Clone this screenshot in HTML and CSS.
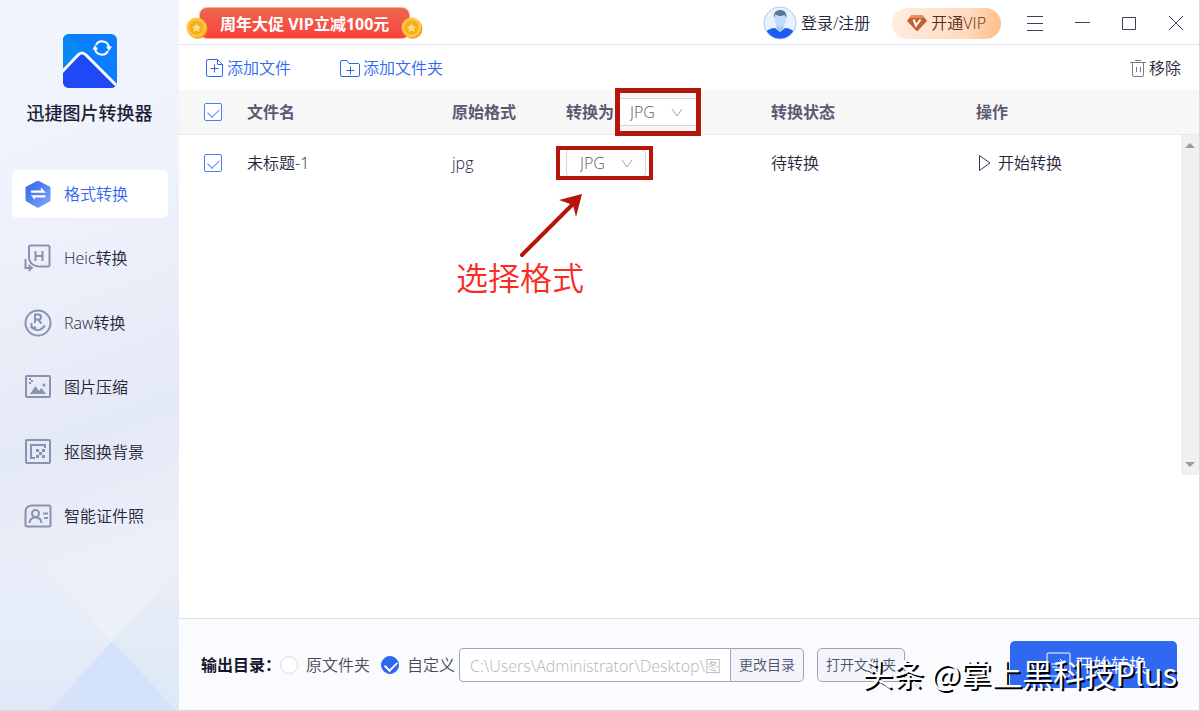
FILE: index.html
```html
<!DOCTYPE html>
<html lang="zh-CN">
<head>
    <meta charset="UTF-8">
    <meta name="viewport" content="width=device-width, initial-scale=1.0">
    <title>迅捷图片转换器</title>
    <link rel="stylesheet" href="styles.css">
</head>
<body>
    <aside class="sidebar">
        <svg class="facets" viewBox="0 0 179 171" preserveAspectRatio="none">
            <defs>
                <linearGradient id="facetLeft" x1="0" y1="0" x2="0" y2="1">
                    <stop offset="0" stop-color="#e9f0fb" stop-opacity=".3"/>
                    <stop offset="1" stop-color="#e0e7f7"/>
                </linearGradient>
                <linearGradient id="facetRight" x1="0" y1="0" x2="0" y2="1">
                    <stop offset="0" stop-color="#eaedf6"/>
                    <stop offset="1" stop-color="#dbe9f7"/>
                </linearGradient>
            </defs>
            <path d="M0 0H20L112 102L50 171H0Z" fill="url(#facetLeft)"/>
            <path d="M112 102L179 30V171H176Z" fill="url(#facetRight)"/>
            <path d="M112 102L176 171H50Z" fill="#d4e3f9"/>
        </svg>
        <div class="brand">
            <svg width="54" height="54" viewBox="0 0 54 54">
                <defs>
                    <clipPath id="logoClip"><rect width="54" height="54" rx="6"/></clipPath>
                </defs>
                <g clip-path="url(#logoClip)">
                    <rect width="54" height="54" fill="#0b7dff"/>
                    <path d="M0 0H5L30 26L0 40Z" fill="#0788f2"/>
                    <path d="M-3 40L15 21Q19 17 23 21L56 54V60H-3Z" fill="#1f49f6" stroke="#fff" stroke-width="3"/>
                </g>
                <g fill="none" stroke="#fff" stroke-width="2">
                    <path d="M33 11A7 7 0 0 1 46 13"/>
                    <path d="M45 17A7 7 0 0 1 32 15"/>
                </g>
                <path d="M43 12.500H49L46 17ZM29.500 15.500H35L32 11Z" fill="#fff"/>
            </svg>
            <h1>迅捷图片转换器</h1>
        </div>
        <nav class="menu">
            <a href="#" class="menu-item active">
                <svg width="28" height="28" viewBox="0 0 28 28">
                    <defs>
                        <linearGradient id="hex" x1="0" y1="0" x2="1" y2="1">
                            <stop offset="0" stop-color="#2c62ee"/>
                            <stop offset="1" stop-color="#84a6fb"/>
                        </linearGradient>
                    </defs>
                    <path d="M13 1Q14 .4 15 1L25.500 6.500Q26.500 7 26.500 8V20Q26.500 21 25.500 21.500L15 27.500Q14 28 13 27.500L2.500 21.500Q1.500 21 1.500 20V8Q1.500 7 2.500 6.500Z" fill="url(#hex)"/>
                    <path d="M7 10.500H17V7.500L22 12.800H7ZM21.500 17.500H11V20L7 15.200H21.500Z" fill="#fff"/>
                </svg>
                <span>格式转换</span>
            </a>
            <a href="#" class="menu-item">
                <svg class="line" width="28" height="28" viewBox="0 0 28 28">
                    <path d="M5 3Q5 1.500 6.500 1.500H24Q25.500 1.500 25.500 3V21Q25.500 22.500 24 22.500H14Q5 21 5 13Z"/>
                    <path d="M11.500 7V17M18.500 7V17M11.500 12H18.500M1.500 15V24H6"/>
                    <path d="M4.500 20L9.500 24L4.500 28Z" class="solid"/>
                </svg>
                <span>Heic转换</span>
            </a>
            <a href="#" class="menu-item">
                <svg class="line" width="28" height="28" viewBox="0 0 28 28">
                    <circle cx="14" cy="14" r="12.500"/>
                    <path d="M11 14V5.500H14.500Q17 5.500 17 8T14.500 10.500H11M14 10.500L17.500 14.500M7.500 14V19M7.500 18Q14 25 21 16.500M7 18.500H12"/>
                </svg>
                <span>Raw转换</span>
            </a>
            <a href="#" class="menu-item">
                <svg class="line" width="28" height="28" viewBox="0 0 28 28">
                    <rect x="2" y="3" width="24" height="21" rx="1"/>
                    <path d="M6 21L11.500 13L15 18L17.500 15L22 21Z" class="solid"/>
                    <circle cx="20" cy="12" r="1.500" class="solid"/>
                    <path d="M5 5H7V7H9V9H7V11H5V9H7V7H5Z" class="solid"/>
                </svg>
                <span>图片压缩</span>
            </a>
            <a href="#" class="menu-item">
                <svg class="line" width="28" height="28" viewBox="0 0 28 28">
                    <rect x="2" y="2" width="24" height="23" rx="1"/>
                    <path d="M11 20H7V7H21V10"/>
                    <path d="M12 11H15V14H12ZM18 11H21V14H18ZM15 14H18V17H15ZM12 17H15V20H12ZM18 17H21V20H18Z" class="solid"/>
                </svg>
                <span>抠图换背景</span>
            </a>
            <a href="#" class="menu-item">
                <svg class="line" width="28" height="28" viewBox="0 0 28 28">
                    <path d="M8 3.500H25Q26.500 3.500 26.500 5V23Q26.500 24.500 25 24.500H3Q1.500 24.500 1.500 23V10Q1.500 4 8 3.500Z"/>
                    <circle cx="11.500" cy="11.500" r="3.500"/>
                    <path d="M5.500 21Q6 15.500 11.500 15.500T17.500 21M19 11.500H24M20 16H24"/>
                </svg>
                <span>智能证件照</span>
            </a>
        </nav>
    </aside>

    <main class="main">
        <header class="topbar">
            <a href="#" class="promo">
                <svg class="coin" width="22" height="22" viewBox="0 0 22 22">
                    <circle cx="11.500" cy="11.800" r="10" fill="#f09a1a"/>
                    <circle cx="10.500" cy="10.500" r="10" fill="#ffc63c"/>
                    <circle cx="10.500" cy="10.500" r="7" fill="#f5ab25"/>
                    <path d="M10.500 6L12 9L15 9.500L13 12L13.500 15L10.500 13.500L7.500 15L8 12L6 9.500L9 9Z" fill="#ffdf7a"/>
                </svg>
                <span class="promo-text">周年大促 VIP立减100元</span>
                <svg class="coin" width="22" height="22" viewBox="0 0 22 22">
                    <circle cx="11.500" cy="11.800" r="10" fill="#f09a1a"/>
                    <circle cx="10.500" cy="10.500" r="10" fill="#ffc63c"/>
                    <circle cx="10.500" cy="10.500" r="7" fill="#f5ab25"/>
                    <path d="M10.500 6L12 9L15 9.500L13 12L13.500 15L10.500 13.500L7.500 15L8 12L6 9.500L9 9Z" fill="#ffdf7a"/>
                </svg>
            </a>
            <div class="account">
                <a href="#" class="login">
                    <svg width="34" height="34" viewBox="0 0 34 34">
                        <defs>
                            <clipPath id="avatarClip"><circle cx="17" cy="17" r="15.500"/></clipPath>
                        </defs>
                        <circle cx="17" cy="17" r="16" fill="#e9f3ff" stroke="#a9cbfa"/>
                        <g clip-path="url(#avatarClip)">
                            <path d="M2 34V27Q6 22 12 22L17 26L22 22Q28 22 32 27V34Z" fill="#1c5cf0"/>
                            <path d="M13.500 18H20.500V23Q17 27 13.500 23Z" fill="#a9c8f0"/>
                            <path d="M11.500 10Q17 7 23 10V15Q21 21 17.500 21T11.500 15Z" fill="#c3dcfb"/>
                            <path d="M11 12Q10 5 16 4Q24 3 23.500 12L21.500 9Q16 11 12.500 8.500Z" fill="#5b7796"/>
                        </g>
                    </svg>
                    <span>登录/注册</span>
                </a>
                <button class="vip">
                    <svg width="20" height="18" viewBox="0 0 20 18">
                        <path d="M4.500 1H15.500L20 7L11 16.500Q10 17.500 9 16.500L0 7Z" fill="#c5602f"/>
                        <path d="M4.500 1H15.500L17 4H2.500Z" fill="#e39062"/>
                        <path d="M6.500 5.500L9 11.500L13.500 5.500" fill="none" stroke="#fff" stroke-width="2"/>
                    </svg>
                    <span>开通VIP</span>
                </button>
                <div class="window-buttons">
                    <button aria-label="菜单"><svg width="18" height="18" viewBox="0 0 18 18"><path d="M1 2.500H17M1 9.500H17M1 16.500H17"/></svg></button>
                    <button aria-label="最小化"><svg width="18" height="18" viewBox="0 0 18 18"><path d="M2 8.500H17"/></svg></button>
                    <button aria-label="最大化"><svg width="18" height="18" viewBox="0 0 18 18"><path d="M2.500 3.500H15.500V15.500H2.500Z"/></svg></button>
                    <button aria-label="关闭"><svg width="18" height="18" viewBox="0 0 18 18"><path d="M2 2L16 16M16 2L2 16"/></svg></button>
                </div>
            </div>
        </header>

        <div class="toolbar">
            <button class="tool">
                <svg width="20" height="22" viewBox="0 0 20 22">
                    <path d="M3 2.500H12.500L17.500 7.500V18Q17.500 19.500 16 19.500H3.500Q1.500 19.500 1.500 18V4Q1.500 2.500 3 2.500ZM12.500 2.500V7.500H17.500M5.500 11.500H13.500M9.500 7.500V15.500"/>
                </svg>
                <span>添加文件</span>
            </button>
            <button class="tool">
                <svg width="22" height="22" viewBox="0 0 22 22">
                    <path d="M1.500 18V5Q1.500 3.500 3 3.500H8L10 6.500H19Q20.500 6.500 20.500 8V18Q20.500 19.500 19 19.500H3Q1.500 19.500 1.500 18ZM7.500 13.500H15.500M11.500 9.500V17.500"/>
                </svg>
                <span>添加文件夹</span>
            </button>
            <button class="tool remove">
                <svg width="18" height="20" viewBox="0 0 18 20">
                    <path d="M1 4.500H17M6 2.500H12M3.500 4.500V17Q3.500 18.500 5 18.500H13Q14.500 18.500 14.500 17V4.500M7.500 9V14M11.500 9V14"/>
                </svg>
                <span>移除</span>
            </button>
        </div>

        <section class="list">
            <table class="files">
                <colgroup>
                    <col class="col-check">
                    <col class="col-name">
                    <col class="col-format">
                    <col class="col-target">
                    <col class="col-status">
                    <col>
                </colgroup>
                <thead>
                    <tr>
                        <th class="check"><input type="checkbox" aria-label="全选" checked></th>
                        <th>文件名</th>
                        <th>原始格式</th>
                        <th>
                            <div class="target">
                                <label for="formatAll">转换为</label>
                                <div class="format format-all">
                                    <select id="formatAll"><option>JPG</option><option>PNG</option></select>
                                    <svg class="chevron" width="12" height="10" viewBox="0 0 12 10"><path d="M1 1L6 8L11 1"/></svg>
                                    <span class="mark"></span>
                                </div>
                            </div>
                        </th>
                        <th>转换状态</th>
                        <th>操作</th>
                    </tr>
                </thead>
                <tbody>
                    <tr>
                        <td class="check"><input type="checkbox" aria-label="选择 未标题-1" checked></td>
                        <td>未标题-1</td>
                        <td>jpg</td>
                        <td>
                            <div class="format format-row">
                                <select aria-label="目标格式"><option>JPG</option><option>PNG</option></select>
                                <svg class="chevron" width="12" height="10" viewBox="0 0 12 10"><path d="M1 1L6 8L11 1"/></svg>
                                <span class="mark"></span>
                                <div class="note">
                                    <svg width="64" height="66" viewBox="0 0 64 66">
                                        <path d="M4 63L54 13" stroke="#b4160c" stroke-width="4" stroke-linecap="round"/>
                                        <path d="M64 2L58 25L55 13L41 8Z" fill="#b4160c"/>
                                    </svg>
                                    <span>选择格式</span>
                                </div>
                            </div>
                        </td>
                        <td>待转换</td>
                        <td>
                            <button class="convert">
                                <svg width="14" height="18" viewBox="0 0 14 18"><path d="M1.500 1.500L12 9L1.500 16.500Z"/></svg>
                                <span>开始转换</span>
                            </button>
                        </td>
                    </tr>
                </tbody>
            </table>
            <div class="scrollbar">
                <svg width="10" height="6" viewBox="0 0 10 6"><path d="M0 6L5 1L10 6Z"/></svg>
                <svg width="10" height="6" viewBox="0 0 10 6"><path d="M0 0L5 5L10 0Z"/></svg>
            </div>
        </section>

        <footer class="output">
            <span class="output-title">输出目录：</span>
            <label class="choice"><input type="radio" name="dir"><span>原文件夹</span></label>
            <label class="choice"><input type="radio" name="dir" checked><span>自定义</span></label>
            <div class="path">
                <input type="text" aria-label="输出目录" value="C:\Users\Administrator\Desktop\图片">
                <button>更改目录</button>
            </div>
            <button class="open">打开文件夹</button>
            <button class="start">
                <svg width="25" height="25" viewBox="0 0 25 25">
                    <rect x="1" y="1" width="23" height="23" rx="1"/>
                    <path d="M5 12H19L14 7M19 15H6"/>
                </svg>
                <span>开始转换</span>
            </button>
        </footer>
    </main>
    <div class="watermark">头条 @掌上黑科技Plus</div>
</body>
</html>
```
FILE: styles.css
```css
* {
    box-sizing: border-box;
}
body {
    margin: 0;
    min-height: 100vh;
    display: flex;
    position: relative;
    font-family: "Open Sans", "Noto Sans CJK SC", sans-serif;
    font-size: 16px;
    font-weight: 350;
    line-height: 24px;
    color: #24243a;
    border-right: 1px solid #d9dadd;
    border-bottom: 1px solid #d9dadd;
}
svg {
    display: block;
    flex: none;
    fill: none;
}
a {
    color: inherit;
    text-decoration: none;
}
button, input, select {
    font: inherit;
    color: inherit;
    margin: 0;
}
button {
    display: flex;
    align-items: center;
    padding: 0;
    border: none;
    background: none;
    cursor: pointer;
    white-space: nowrap;
}

/* sidebar */
.sidebar {
    position: relative;
    flex: none;
    width: 179px;
    background: linear-gradient(160deg, #f1f5fe 0%, #edf2fb 30%, #e4e9f6 60%, #ecf0f9 80%);
}
.facets {
    position: absolute;
    left: 0;
    bottom: 0;
    width: 100%;
    height: 171px;
}
.brand {
    display: flex;
    flex-direction: column;
    align-items: center;
    gap: 12px;
    padding-top: 34px;
}
.brand h1 {
    margin: 0;
    font-size: 18px;
    line-height: 26px;
    font-weight: 500;
    color: #1d1e38;
}
.menu {
    position: relative;
    display: flex;
    flex-direction: column;
    justify-content: space-between;
    height: 370px;
    margin: 44px 11px 0 12px;
}
.menu-item {
    display: flex;
    align-items: center;
    gap: 12px;
    height: 48px;
    padding-left: 12px;
    border-radius: 5px;
}
.menu-item.active {
    background: #fff;
    color: #2f66f0;
}
.line {
    stroke: #8b91b0;
    stroke-width: 2;
}
.line .solid {
    fill: #8b91b0;
    stroke: none;
}

/* top bar */
.main {
    flex: 1;
    min-width: 0;
    display: flex;
    flex-direction: column;
    background: #fff;
}
.topbar {
    display: flex;
    align-items: center;
    justify-content: space-between;
    height: 45px;
    padding: 2px 14px 0 7px;
    border-bottom: 1px solid #dfe5f3;
}
.promo {
    display: flex;
    align-items: center;
}
.promo-text {
    margin: 0 -9px;
    padding: 4px 20px 2px;
    border: 1px solid #f6b58d;
    border-radius: 8px;
    background: linear-gradient(#e9684f, #ff3f3f);
    color: #fff;
    font-weight: 700;
}
.coin {
    position: relative;
    top: 5px;
}
.account, .login, .window-buttons {
    display: flex;
    align-items: center;
}
.login {
    gap: 4px;
}
.vip {
    gap: 4px;
    height: 31px;
    margin: 0 25px 0 22px;
    padding: 0 15px;
    border-radius: 16px;
    background: linear-gradient(100deg, #ffeee3, #ffd9bd 70%, #ffbc87);
    color: #5c2c1a;
}
.window-buttons {
    gap: 29px;
}
.window-buttons svg {
    stroke: #3d3f5c;
}

/* toolbar */
.toolbar {
    display: flex;
    align-items: center;
    gap: 48px;
    height: 45px;
    padding: 0 18px 0 26px;
}
.tool {
    gap: 2px;
    color: #2f66f0;
}
.tool svg {
    stroke: #2f66f0;
}
.remove {
    margin-left: auto;
    color: #24243a;
}
.remove svg {
    stroke: #777b90;
}

/* file list */
.list {
    position: relative;
    flex: 1;
}
.files {
    width: 100%;
    table-layout: fixed;
    border-collapse: separate;
    border-spacing: 0;
}
.col-check {
    width: 68px;
}
.col-name, .col-target, .col-status {
    width: 205px;
}
.col-format {
    width: 114px;
}
th, td {
    padding: 0;
    text-align: left;
}
th {
    height: 45px;
    background: #f7f7f8;
    border-bottom: 1px solid #e8e8ea;
    color: #5a5a74;
    font-weight: 700;
}
td {
    height: 56px;
}
.check {
    padding-left: 25px;
}
input[type="checkbox"], input[type="radio"] {
    appearance: none;
    display: block;
    position: relative;
    flex: none;
    width: 18px;
    height: 18px;
    border: 1px solid #4a7df5;
    border-radius: 2px;
    background: #fff;
}
input[type="checkbox"]:checked::after {
    content: "";
    position: absolute;
    left: 5px;
    top: 2px;
    width: 6px;
    height: 10px;
    border: solid #4a7df5;
    border-width: 0 1px 1px 0;
    transform: rotate(45deg);
}
.target {
    display: flex;
    align-items: center;
    gap: 6px;
}
.format {
    position: relative;
    font-weight: 350;
    color: #5a5a60;
}
.format-all {
    width: 76px;
}
.format-row {
    width: 80px;
}
.format select {
    appearance: none;
    display: block;
    width: 100%;
    height: 28px;
    padding: 0 0 0 10px;
    border: 1px solid #d6d6da;
    border-radius: 4px;
    background: #fff;
}
.format-all select {
    border-width: 1px 0;
    border-radius: 0;
}
.format-row select {
    padding-left: 13px;
}
.chevron {
    position: absolute;
    right: 13px;
    top: 10px;
    stroke: #a4a4aa;
}
.mark {
    position: absolute;
    inset: -10px -5px;
    border: 5px solid #b4160c;
    pointer-events: none;
}
.format-row .mark {
    inset: -3px -7px -3px -10px;
    border-width: 4px;
}
.note {
    position: absolute;
    left: -110px;
    top: 43px;
    color: #fb2a22;
    font-size: 32px;
    line-height: 40px;
    white-space: nowrap;
}
.note svg {
    margin-left: 62px;
}
.note span {
    display: block;
}
.convert {
    gap: 6px;
    padding-left: 2px;
}
.convert svg {
    stroke: #33354f;
}
.scrollbar {
    position: absolute;
    right: 0;
    top: 45px;
    display: flex;
    flex-direction: column;
    align-items: center;
    justify-content: space-between;
    width: 18px;
    height: 340px;
    padding: 7px 0;
    background: #f0f0f1;
}
.scrollbar svg {
    fill: #9c9ca0;
}

/* output bar */
.output {
    display: flex;
    align-items: center;
    height: 92px;
    padding: 0 22px;
    border-top: 1px solid #d5deec;
    background: #fafbfe;
    white-space: nowrap;
}
.output-title {
    margin-right: -1px;
    font-weight: 700;
    color: #16172c;
}
.choice {
    display: flex;
    align-items: center;
    gap: 8px;
    margin-right: 11px;
    color: #4b4b55;
}
.choice + .choice {
    margin-right: 4px;
}
input[type="radio"] {
    border-color: #dcdce0;
    border-radius: 50%;
}
input[type="radio"]:checked {
    border-color: #2f66f0;
    background: #2f66f0;
}
input[type="radio"]:checked::after {
    content: "";
    position: absolute;
    left: 5px;
    top: 2px;
    width: 6px;
    height: 10px;
    border: solid #fff;
    border-width: 0 2px 2px 0;
    transform: rotate(45deg);
}
.path {
    flex: 1;
    display: flex;
    min-width: 0;
    max-width: 345px;
}
.path input {
    flex: 1;
    min-width: 0;
    height: 34px;
    padding: 0 10px;
    border: 1px solid #a2a2b4;
    border-radius: 4px 0 0 4px;
    background: #fff;
    color: #b5b5b8;
    font-weight: 300;
}
.path button, .open {
    justify-content: center;
    width: 73px;
    height: 34px;
    border: 1px solid #a2a2b4;
    border-radius: 0 5px 5px 0;
    background: #f3f5fb;
    color: #4e5270;
    font-size: 14px;
}
.path button {
    border-left: none;
}
.open {
    width: 88px;
    margin-left: 13px;
    border-radius: 5px;
}
.start {
    justify-content: center;
    gap: 4px;
    width: 167px;
    height: 47px;
    padding-left: 6px;
    margin-left: auto;
    border-radius: 5px;
    background: #2f69f2;
    color: #fff;
    font-size: 18px;
}
.start svg {
    stroke: #fff;
}
.watermark {
    position: absolute;
    right: 22px;
    bottom: 17px;
    color: #fff;
    font-family: "Noto Sans CJK SC", sans-serif;
    font-size: 31px;
    font-weight: 400;
    line-height: 40px;
    text-shadow: 2px 2px 0 #000;
    pointer-events: none;
}
```
